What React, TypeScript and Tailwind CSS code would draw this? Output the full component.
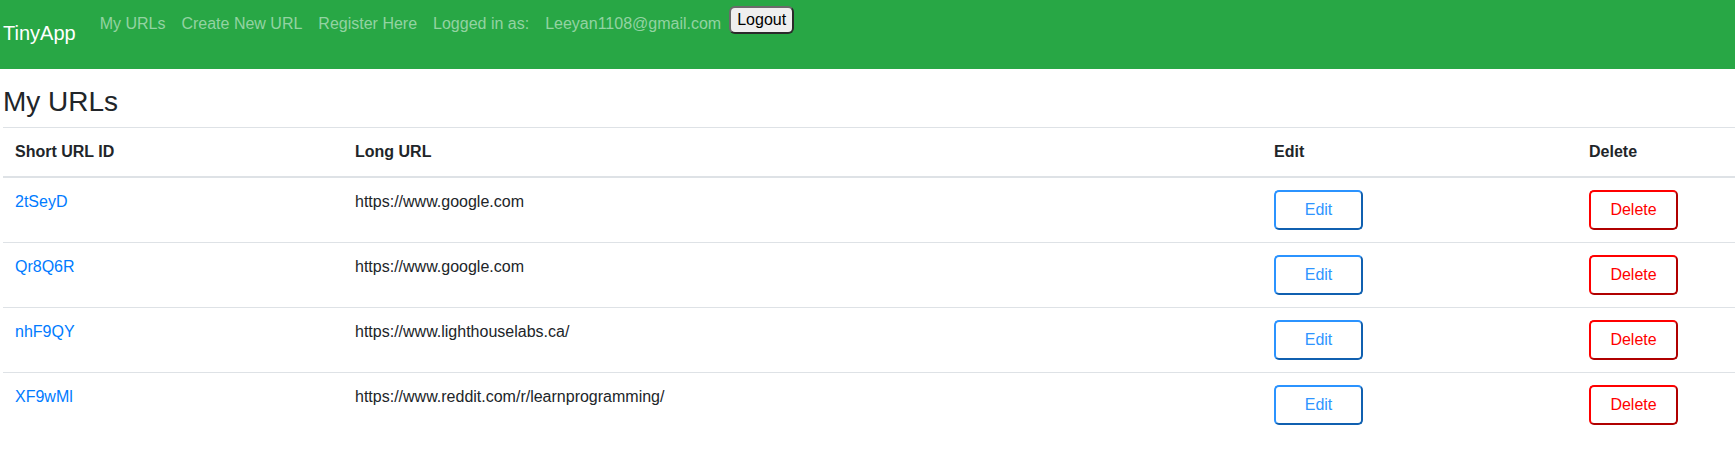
const urls = [
  { id: '2tSeyD', long: 'https://www.google.com' },
  { id: 'Qr8Q6R', long: 'https://www.google.com' },
  { id: 'nhF9QY', long: 'https://www.lighthouselabs.ca/' },
  { id: 'XF9wMl', long: 'https://www.reddit.com/r/learnprogramming/' },
];

function Navbar() {
  return (
    <nav className="h-[69px] bg-[#28a745] flex items-start pt-[6px] pl-[3px]">
      <a className="mt-[12px] mr-4 text-[20px] leading-[30px] text-white">TinyApp</a>
      <a className="mt-[6px] px-2 text-[16px] leading-6 text-[#93d3a2]">My URLs</a>
      <a className="mt-[6px] px-2 text-[16px] leading-6 text-[#93d3a2]">Create New URL</a>
      <a className="mt-[6px] px-2 text-[16px] leading-6 text-[#93d3a2]">Register Here</a>
      <span className="mt-[6px] px-2 text-[16px] leading-6 text-[#93d3a2]">Logged in as:</span>
      <span className="mt-[6px] px-2 text-[16px] leading-6 text-[#93d3a2]">Leeyan1108@gmail.com</span>
      <button className="h-[28px] px-[6px] border-2 border-t-[#6b6b6b] border-l-[#6b6b6b] border-b-[#2a2a2a] border-r-[#2a2a2a] rounded-[6px] bg-[#efefef] text-[16px] leading-6 text-black">
        Logout
      </button>
    </nav>
  );
}

export default function App() {
  return (
    <div className="font-['Liberation_Sans',Arial,sans-serif] text-[#212529] bg-white min-h-[451px]">
      <Navbar />
      <main className="pl-[3px]">
        <h3 className="mt-4 mb-2 text-[28px] leading-[1.2] font-normal">My URLs</h3>
        <table className="w-full table-fixed border-collapse text-[16px] leading-6">
          <colgroup>
            <col className="w-[340px]" />
            <col className="w-[919px]" />
            <col className="w-[315px]" />
            <col />
          </colgroup>
          <thead>
            <tr>
              <th className="p-3 text-left font-bold border-t border-b-2 border-[#dee2e6]">Short URL ID</th>
              <th className="p-3 text-left font-bold border-t border-b-2 border-[#dee2e6]">Long URL</th>
              <th className="p-3 text-left font-bold border-t border-b-2 border-[#dee2e6]">Edit</th>
              <th className="p-3 text-left font-bold border-t border-b-2 border-[#dee2e6]">Delete</th>
            </tr>
          </thead>
          <tbody>
            {urls.map((u) => (
              <tr key={u.id}>
                <td className="p-3 align-top border-t border-[#dee2e6]">
                  <a className="text-[#007bff]">{u.id}</a>
                </td>
                <td className="p-3 align-top border-t border-[#dee2e6]">{u.long}</td>
                <td className="p-3 align-top border-t border-[#dee2e6]">
                  <button className="w-[89px] h-[40px] rounded-[5px] border-2 border-t-[#2b93ff] border-l-[#2b93ff] border-b-[#1060b0] border-r-[#1060b0] bg-white text-[#2f95ff]">
                    Edit
                  </button>
                </td>
                <td className="p-3 align-top border-t border-[#dee2e6]">
                  <button className="w-[89px] h-[40px] rounded-[5px] border-2 border-t-[#ff0000] border-l-[#ff0000] border-b-[#b00000] border-r-[#b00000] bg-white text-[#ff0000]">
                    Delete
                  </button>
                </td>
              </tr>
            ))}
          </tbody>
        </table>
      </main>
    </div>
  );
}
